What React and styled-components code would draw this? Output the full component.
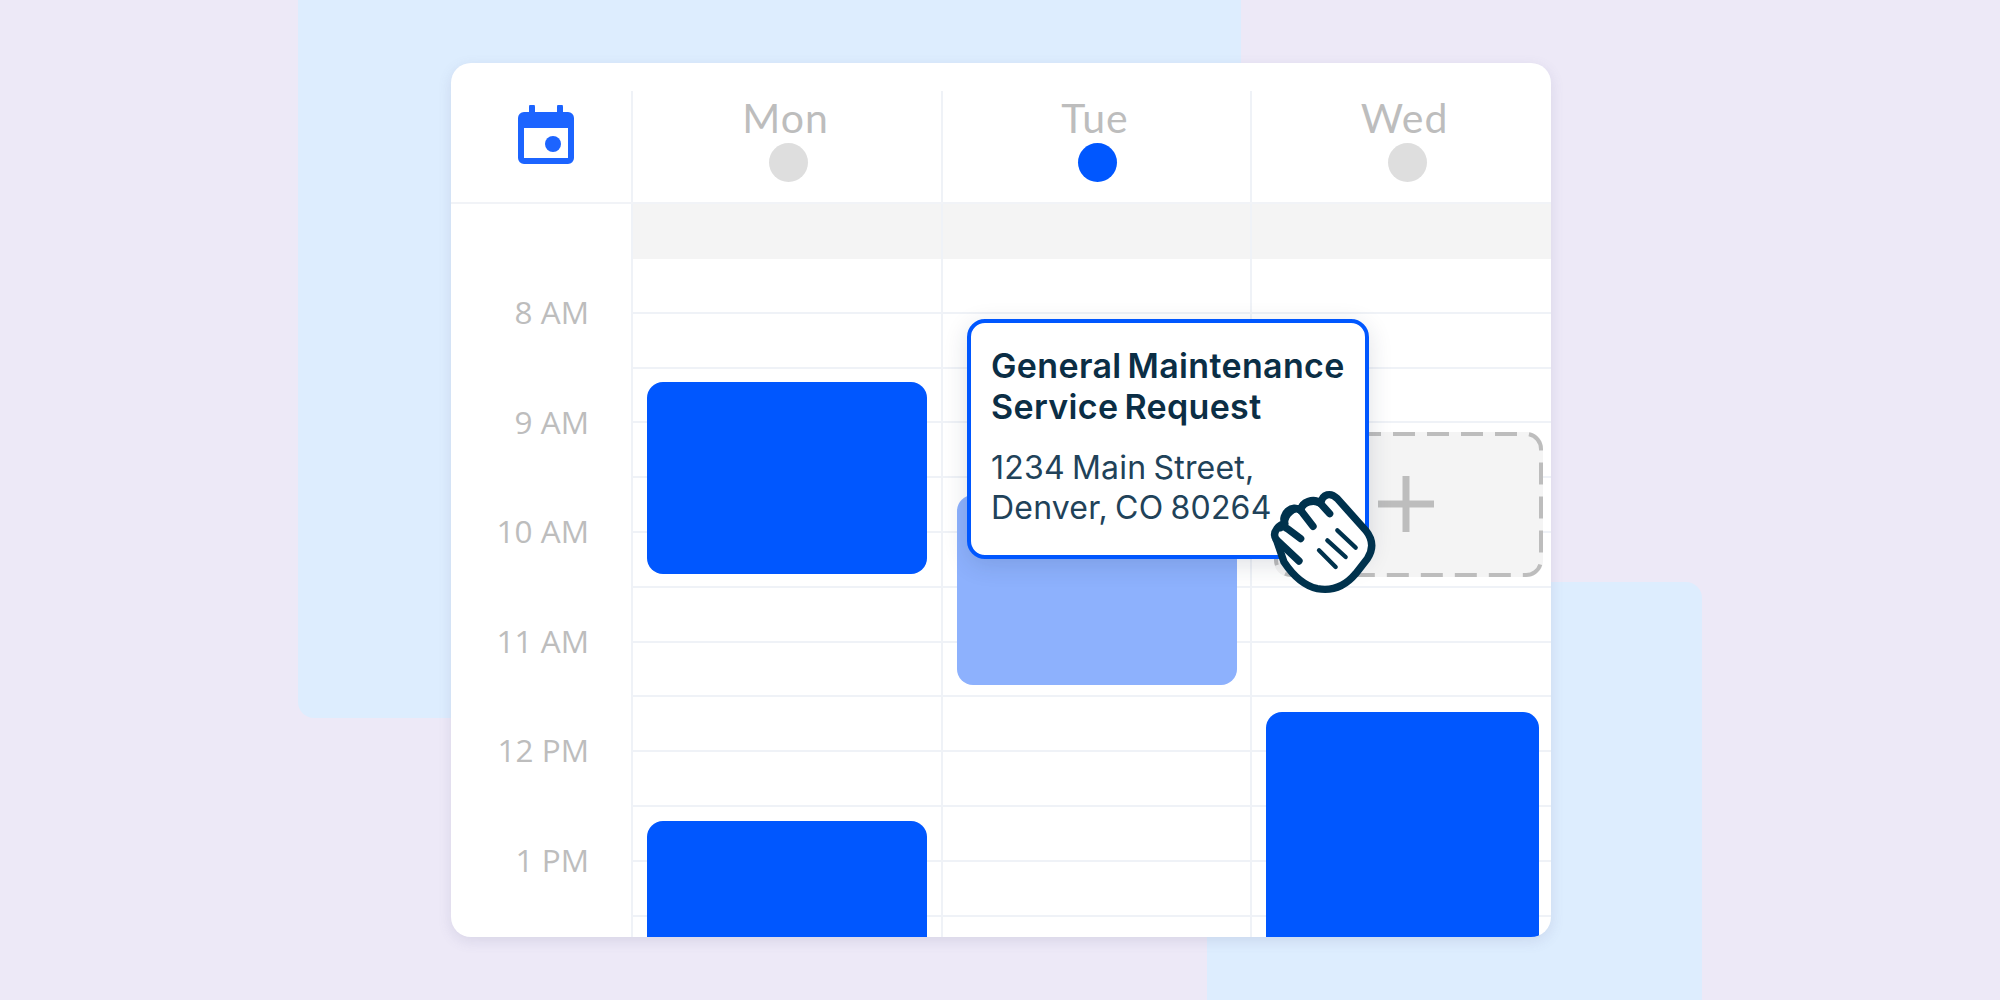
import React from "react";
import styled, { createGlobalStyle } from "styled-components";

const GlobalStyle = createGlobalStyle`
  html, body { margin: 0; padding: 0; }
  body { background: #ede9f7; }
`;

const Page = styled.div`
  position: relative;
  width: 2000px;
  height: 1000px;
  overflow: hidden;
  background: #ede9f7;
  padding: 63px 0 0 451px;
  box-sizing: border-box;
`;

const BackSquare = styled.div`
  position: absolute;
  background: #ddedfe;
  border-radius: 16px;
  left: ${({ $left }) => $left}px;
  top: ${({ $top }) => $top}px;
  width: ${({ $width }) => $width}px;
  height: ${({ $height }) => $height}px;
`;

const Card = styled.div`
  position: relative;
  width: 1100px;
  height: 874px;
  background: #fff;
  border-radius: 20px;
  overflow: hidden;
  box-shadow: 0 4px 14px rgba(90, 90, 140, 0.14);
`;

const HeaderRow = styled.div`
  display: grid;
  grid-template-columns: 180px 310px 309px 310px;
  height: 141px;
  box-sizing: border-box;
  border-bottom: 2px solid #f1f3f7;
`;

const IconCell = styled.div`
  display: flex;
  align-items: flex-start;
  justify-content: center;
  padding: 42px 0 0 10px;
`;

const DayCell = styled.div`
  display: flex;
  flex-direction: column;
  align-items: center;
  margin-top: 28px;
  padding-left: 2px;
  border-left: 2px solid #eff2f7;
`;

const DayName = styled.div`
  font-family: Lato, sans-serif;
  font-size: 41px;
  line-height: 40px;
  margin: 7px 0 0 -5px;
  color: #bdbdbd;
  letter-spacing: 1px;
`;

const DayDot = styled.div`
  width: 39px;
  height: 39px;
  border-radius: 50%;
  margin-top: 5px;
  background: ${({ $active }) => ($active ? "#0057ff" : "#dedede")};
`;

const Body = styled.div`
  display: grid;
  grid-template-columns: 180px 310px 309px 310px;
  height: 733px;
`;

const Gutter = styled.div`
  padding-top: 53px;
`;

const TimeLabel = styled.div`
  height: 109.6px;
  line-height: 109.6px;
  padding-right: 42px;
  text-align: right;
  font-family: "Open Sans", sans-serif;
  font-size: 31.5px;
  color: #bdbdbd;
`;

const Column = styled.div`
  position: relative;
  border-left: 2px solid #eff2f7;
`;

const AllDayBand = styled.div`
  height: 55px;
  background: #f4f4f4;
`;

const Slot = styled.div`
  height: 54.8px;
  box-sizing: border-box;
  border-bottom: 2px solid #eff2f7;
`;

const EventBlock = styled.div`
  position: absolute;
  left: ${({ $left }) => $left}px;
  width: ${({ $width }) => $width}px;
  top: ${({ $top }) => $top}px;
  height: ${({ $height }) => $height}px;
  background: ${({ $ghost }) => ($ghost ? "#8db1fd" : "#0057ff")};
  border-radius: 16px;
`;

const DropTarget = styled.div`
  position: absolute;
  left: 22px;
  top: 228px;
  width: 269px;
  height: 145px;
  border-radius: 16px;
  background: #f4f4f4;
`;

const DashedOutline = styled.svg`
  position: absolute;
  inset: 0;
`;

const Plus = styled.svg`
  position: absolute;
  left: 104px;
  top: 44px;
`;

const Tooltip = styled.div`
  position: absolute;
  left: 516px;
  top: 256px;
  width: 402px;
  height: 240px;
  box-sizing: border-box;
  padding: 22px 0 0 20px;
  background: #fff;
  border: 4px solid #0057ff;
  border-radius: 18px;
  box-shadow: 0 6px 24px rgba(30, 40, 70, 0.14);
`;

const TooltipTitle = styled.div`
  font-family: Inter, sans-serif;
  font-weight: 600;
  font-size: 34px;
  line-height: 41px;
  letter-spacing: 0.35px;
  word-spacing: -3px;
  color: #0b2e45;
`;

const TooltipText = styled.div`
  margin-top: 21px;
  font-family: Inter, sans-serif;
  font-weight: 400;
  font-size: 32px;
  line-height: 40px;
  letter-spacing: 0.2px;
  word-spacing: -2px;
  color: #214259;
`;

const HandIcon = styled.svg`
  position: absolute;
  left: 818px;
  top: 424px;
`;

const CalendarIcon = () => (
  <svg width="56" height="60" viewBox="0 0 56 60">
    <path d="M11 2a3 3 0 0 1 6 0v5h22V2a3 3 0 0 1 6 0v5h5a6 6 0 0 1 6 6v40a6 6 0 0 1-6 6H6a6 6 0 0 1-6-6V13a6 6 0 0 1 6-6h5z" fill="#1c64ff" />
    <rect x="6" y="23" width="44" height="30" fill="#fff" />
    <circle cx="35" cy="39" r="8" fill="#1c64ff" />
  </svg>
);

const Hand = () => (
  <HandIcon width="112" height="112" viewBox="90 50 336 336" fill="none" strokeLinecap="round" strokeLinejoin="round">
    <path
      d="M135 275C155 305 190 345 235 355C290 365 325 340 350 310L385 265C405 235 400 205 380 180L295 85C275 65 250 70 245 100C225 80 185 95 185 120C160 100 125 130 137 160C125 160 95 185 112 208Z"
      fill="#fff"
      stroke="#00324d"
      strokeWidth="22"
    />
    <g stroke="#00324d" strokeWidth="22">
      <path d="M180 272L112 208" />
      <path d="M125 172C130 165 138 170 145 175L185 205" />
      <path d="M137 160C135 135 165 105 185 120L222 168" />
      <path d="M185 120C190 95 225 85 245 100L272 130" />
    </g>
    <g stroke="#00324d" strokeWidth="13">
      <path d="M240 240L290 290" />
      <path d="M265 210L320 260" />
      <path d="M295 180L350 232" />
    </g>
  </HandIcon>
);

const days = [
  { name: "Mon" },
  { name: "Tue", active: true },
  { name: "Wed" },
];

const times = ["8 AM", "9 AM", "10 AM", "11 AM", "12 PM", "1 PM"];

const columns = [
  {
    events: [
      { left: 14, width: 280, top: 178, height: 192 },
      { left: 14, width: 280, top: 617, height: 200 },
    ],
  },
  { events: [{ left: 14, width: 280, top: 291, height: 190, ghost: true }] },
  { events: [{ left: 14, width: 273, top: 508, height: 300 }], drop: true },
];

const slots = Array.from({ length: 13 });

const App = () => {
  return (
    <Page>
      <GlobalStyle />
      <BackSquare $left={298} $top={-40} $width={943} $height={758} />
      <BackSquare $left={1207} $top={582} $width={495} $height={500} />
      <Card>
        <HeaderRow>
          <IconCell>
            <CalendarIcon />
          </IconCell>
          {days.map((day) => (
            <DayCell key={day.name}>
              <DayName>{day.name}</DayName>
              <DayDot $active={day.active} />
            </DayCell>
          ))}
        </HeaderRow>
        <Body>
          <Gutter>
            {times.map((time) => (
              <TimeLabel key={time}>{time}</TimeLabel>
            ))}
          </Gutter>
          {columns.map((col, i) => (
            <Column key={i}>
              <AllDayBand />
              {slots.map((_, n) => (
                <Slot key={n} />
              ))}
              {col.events.map((ev, n) => (
                <EventBlock
                  key={n}
                  $left={ev.left}
                  $width={ev.width}
                  $top={ev.top}
                  $height={ev.height}
                  $ghost={ev.ghost}
                />
              ))}
              {col.drop && (
                <DropTarget>
                  <DashedOutline width="269" height="145" viewBox="0 0 269 145">
                    <rect x="2" y="2" width="265" height="141" rx="15" fill="none" stroke="#bdbdbd" strokeWidth="4" strokeDasharray="22 12" />
                  </DashedOutline>
                  <Plus width="56" height="56" viewBox="0 0 56 56">
                    <path d="M28 0v56M0 28h56" stroke="#bdbdbd" strokeWidth="7" />
                  </Plus>
                </DropTarget>
              )}
            </Column>
          ))}
        </Body>
        <Tooltip>
          <TooltipTitle>
            General Maintenance
            <br />
            Service Request
          </TooltipTitle>
          <TooltipText>
            1234 Main Street,
            <br />
            Denver, CO 80264
          </TooltipText>
        </Tooltip>
        <Hand />
      </Card>
    </Page>
  );
};

export default App;
